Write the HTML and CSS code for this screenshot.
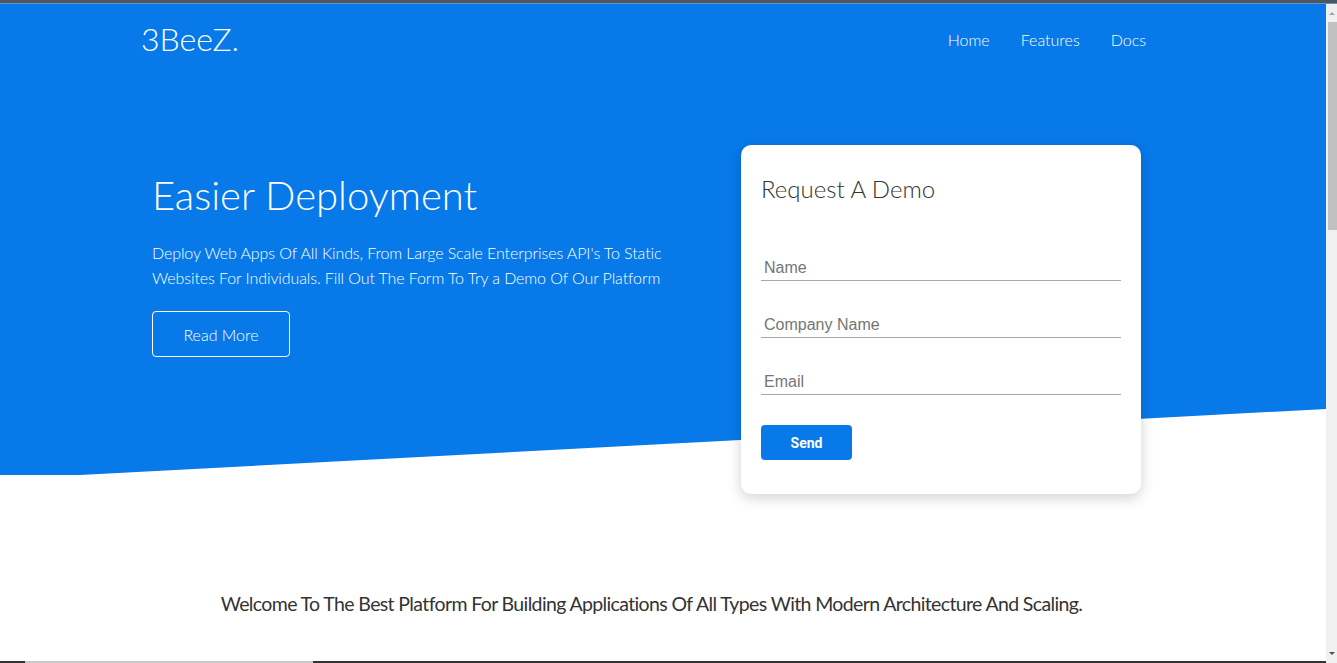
FILE: index.html
```html
<!DOCTYPE html>
<html lang="en">
<head>
<meta charset="utf-8">
<title>3BeeZ.</title>
<link rel="stylesheet" href="styles.css">
</head>
<body>
<div class="topstrip"></div>
<div class="page">
  <header class="hero">
    <nav class="nav">
      <a class="logo" href="#">3BeeZ.</a>
      <ul class="links">
        <li><a href="#">Home</a></li>
        <li><a href="#">Features</a></li>
        <li><a href="#">Docs</a></li>
      </ul>
    </nav>
    <div class="hero-row">
      <div class="hero-text">
        <h1>Easier Deployment</h1>
        <p>Deploy Web Apps Of All Kinds, From Large Scale Enterprises API's To Static Websites For Individuals. Fill Out The Form To Try a Demo Of Our Platform</p>
        <a class="btn-outline" href="#">Read More</a>
      </div>
      <form class="card">
        <h2>Request A Demo</h2>
        <div class="fields">
          <input type="text" placeholder="Name">
          <input type="text" placeholder="Company Name">
          <input type="email" placeholder="Email">
        </div>
        <button type="button" class="send">Send</button>
      </form>
    </div>
  </header>
  <section class="welcome">
    <p>Welcome To The Best Platform For Building Applications Of All Types With Modern Architecture And Scaling.</p>
  </section>
  <div class="next">
    <span class="seg dark1"></span>
    <span class="seg gray"></span>
    <span class="seg dark2"></span>
  </div>
</div>
<div class="scrollbar"><div class="arrow up"></div><div class="thumb"></div><div class="arrow down"></div></div>
</body>
</html>
```
FILE: styles.css
```css
* { box-sizing: border-box; }
html, body { margin: 0; padding: 0; height: 100%; overflow: hidden; background: #fff; }
body { font-family: Lato, "Open Sans", sans-serif; color: #333; }

.topstrip { height: 4px; background: #4a5866; border-bottom: 1px solid #6b8fb0; }

.page { width: 1326px; }

.hero { position: relative; height: 471px; }
.hero::before {
  content: "";
  position: absolute;
  inset: 0;
  background: #0779e9;
  clip-path: polygon(0 0, 100% 0, 100% 405px, 80px 471px, 0 471px);
  z-index: 0;
}

.nav {
  position: relative;
  z-index: 1;
  display: flex;
  align-items: center;
  justify-content: space-between;
  padding: 16px 180px 0 141px;
}
.logo {
  font-size: 32px;
  font-weight: 300;
  line-height: 38px;
  color: #fff;
  text-decoration: none;
}
.links { list-style: none; margin: 0; padding: 0; display: flex; gap: 31px; }
.links a { color: #fff; text-decoration: none; font-size: 16px; font-weight: 300; line-height: 19px; }

.hero-row {
  position: relative;
  z-index: 2;
  display: flex;
  align-items: flex-start;
  margin-top: 87px;
  padding-left: 152px;
}
.hero-text { width: 589px; padding-top: 25px; color: #fff; }
.hero-text h1 {
  margin: 0;
  font-size: 40px;
  font-weight: 300;
  line-height: 50px;
}
.hero-text p {
  margin: 20px 0 0;
  font-size: 16px;
  font-weight: 300;
  letter-spacing: -0.1px;
  line-height: 25px;
  width: 540px;
}
.btn-outline {
  display: flex;
  align-items: center;
  justify-content: center;
  width: 138px;
  height: 46px;
  margin-top: 21px;
  border: 1px solid #fff;
  border-radius: 4px;
  color: #fff;
  text-decoration: none;
  font-size: 16px;
  font-weight: 300;
}

.card {
  width: 400px;
  background: #fff;
  border-radius: 10px;
  box-shadow: 0 4px 14px rgba(0, 0, 0, 0.18);
  padding: 29px 20px 34px;
}
.card h2 {
  margin: 0;
  font-size: 24px;
  font-weight: 300;
  line-height: 29px;
  color: #333;
}
.fields { display: flex; flex-direction: column; gap: 30px; margin-top: 51px; }
.fields input {
  display: block;
  width: 360px;
  height: 27px;
  padding: 2px 3px 0;
  border: none;
  border-bottom: 1px solid #a9a9a9;
  font-family: "Liberation Sans", Arial, sans-serif;
  font-size: 16px;
  color: #333;
  outline: none;
  background: transparent;
}
.fields input::placeholder { color: #757575; }
.send {
  margin-top: 30px;
  width: 91px;
  height: 35px;
  border: none;
  border-radius: 4px;
  background: #0779e9;
  color: #fff;
  font-family: Roboto, "Liberation Sans", Arial, sans-serif;
  font-size: 14px;
  font-weight: 700;
}

.welcome { padding: 117px 23px 0 0; text-align: center; }
.welcome p { margin: 0; font-size: 19.5px; letter-spacing: -0.63px; line-height: 24px; color: #333; }

.next { display: flex; margin-top: 45px; height: 2px; }
.seg { display: block; height: 2px; }
.dark1 { width: 25px; background: #333; }
.gray { width: 288px; background: #c8c8c8; }
.dark2 { flex: 1; background: #333; }

.scrollbar {
  position: fixed;
  top: 4px;
  right: 0;
  bottom: 0;
  width: 11px;
  background: #f0f0f0;
  display: flex;
  flex-direction: column;
  align-items: center;
}
.arrow { width: 0; height: 0; border-left: 3px solid transparent; border-right: 3px solid transparent; }
.arrow.up { margin-top: 8px; border-bottom: 3px solid #a3a3a3; }
.arrow.down { margin-top: auto; margin-bottom: 8px; border-top: 3px solid #505050; }
.thumb { margin-top: 7px; width: 9px; margin-left: 2px; height: 208px; background: #c1c1c1; }
```
